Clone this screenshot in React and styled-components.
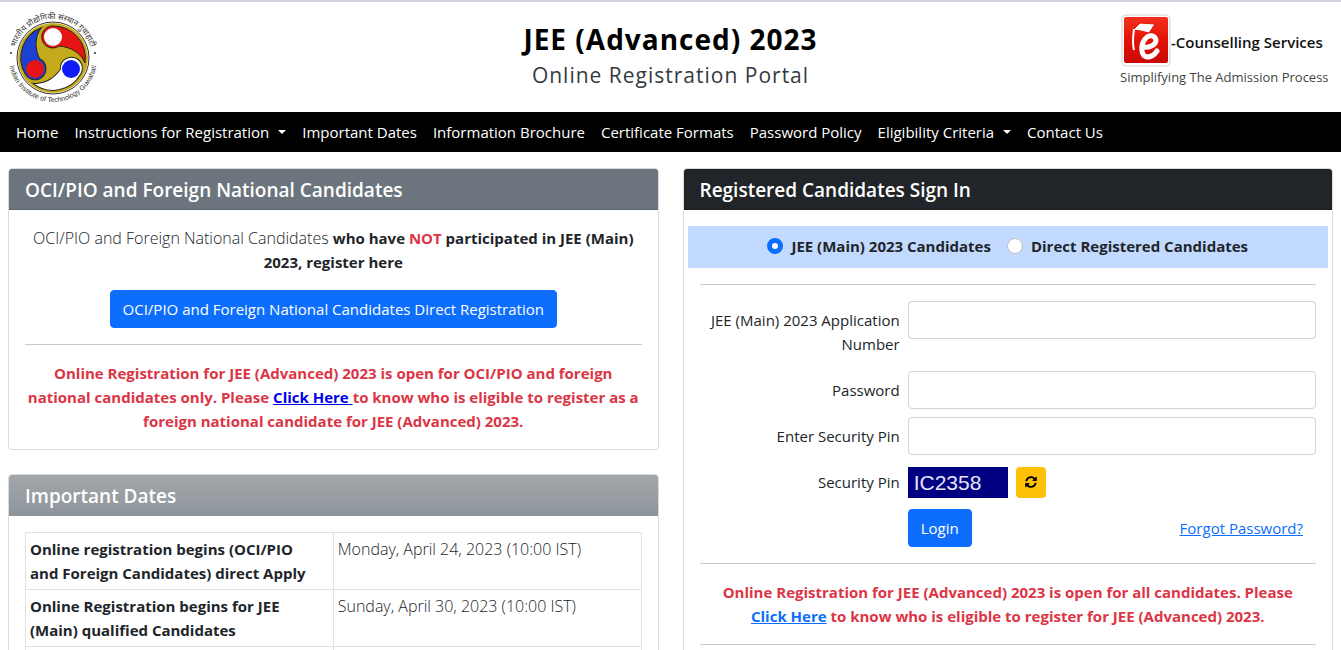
import React, { useState } from 'react'
import styled, { createGlobalStyle } from 'styled-components'

const GlobalStyle = createGlobalStyle`
  * {
    box-sizing: border-box;
  }
  body {
    margin: 0;
    background: #fff;
    color: #212529;
    font-family: 'Segoe UI', 'Open Sans', 'Noto Sans', sans-serif;
    font-size: 15px;
    line-height: 24px;
    overflow-x: hidden;
  }
  button,
  input {
    font: inherit;
  }
`

const Header = styled.header`
  display: grid;
  grid-template-columns: 1fr auto 1fr;
  align-items: start;
  height: 112px;
  padding: 10px 8px 0;
  border-top: 2px solid #d3d1dc;
`
const TitleBlock = styled.div`
  padding-top: 9px;
  text-align: center;
`
const Title = styled.h1`
  margin: 0;
  color: #000;
  font-size: 28px;
  font-weight: 700;
  line-height: 36px;
  letter-spacing: 1px;
`
const Subtitle = styled.p`
  margin: 0;
  color: #343a40;
  font-size: 21px;
  line-height: 36px;
  letter-spacing: 1px;
`
const Brand = styled.div`
  justify-self: end;
  display: flex;
  flex-direction: column;
  align-items: flex-start;
  min-width: 213px;
`
const BrandRow = styled.div`
  display: flex;
  align-items: center;
`
const BrandName = styled.span`
  padding-top: 4px;
  color: #111;
  font-size: 15px;
  font-weight: 600;
`
const Tagline = styled.span`
  color: #444;
  font-size: 13px;
  line-height: 20px;
`

const Nav = styled.nav`
  background: #000;
  padding: 0 8px;
`
const NavList = styled.ul`
  display: flex;
  flex-wrap: wrap;
  margin: 0;
  padding: 0;
  list-style: none;
`
const NavLink = styled.a`
  display: flex;
  align-items: center;
  padding: 8px;
  color: #fff;
  text-decoration: none;
`
const Caret = styled.span`
  margin-left: 9px;
  border-top: 4px solid;
  border-left: 4px solid transparent;
  border-right: 4px solid transparent;
`

const Main = styled.main`
  display: grid;
  grid-template-columns: repeat(2, minmax(0, 1fr));
  gap: 24px;
  align-items: start;
  padding: 16px 8px;
`
const Column = styled.div`
  display: flex;
  flex-direction: column;
  gap: 24px;
`
const Card = styled.section`
  border: 1px solid #d9dadb;
  border-radius: 4px;
  overflow: hidden;
`
const CardHeader = styled.h2`
  margin: 0;
  padding: 9px 16px 7px;
  border-bottom: 1px solid rgba(0, 0, 0, 0.12);
  background: ${(p) => p.$bg};
  color: #fff;
  font-size: 19px;
  font-weight: 600;
  line-height: 24px;
`
const CardBody = styled.div`
  padding: 16px;
`
const Text = styled.p`
  margin: 0 0 16px;
  font-size: 16px;
  font-weight: 300;
  text-align: center;
`
const Strong = styled.strong`
  font-size: 15px;
  font-weight: 700;
`
const Notice = styled.p`
  margin: 0;
  color: #dc3545;
  font-weight: 700;
  text-align: center;
`
const Danger = styled.span`
  color: #dc3545;
`
const Divider = styled.hr`
  margin: 16px 0;
  border: 0;
  border-top: 1px solid #c8c9ca;
`
const Link = styled.a`
  color: ${(p) => p.$color || '#0d6efd'};
  white-space: nowrap;
`
const Button = styled.button`
  padding: 6px 12px;
  border: 1px solid #0d6efd;
  border-radius: 4px;
  background: #0d6efd;
  color: #fff;
  cursor: pointer;
`
const ButtonRow = styled.div`
  display: flex;
  justify-content: center;
`

const DatesTable = styled.table`
  width: 100%;
  table-layout: fixed;
  border-collapse: collapse;
  th,
  td {
    padding: 4px;
    border: 1px solid #dee2e6;
    text-align: left;
    vertical-align: top;
  }
  th {
    padding-right: 16px;
    font-weight: 700;
  }
  td {
    font-size: 16px;
    font-weight: 300;
  }
`

const ModeBar = styled.div`
  display: flex;
  flex-wrap: wrap;
  justify-content: center;
  gap: 16px;
  margin: 0 -12px;
  padding: 8px 0 10px;
  background: #c2daff;
`
const RadioLabel = styled.label`
  display: flex;
  align-items: center;
  gap: 8px;
  font-weight: 700;
`
const Radio = styled.input`
  appearance: none;
  width: 16px;
  height: 16px;
  margin: 0;
  border: 1px solid #bfbfbf;
  border-radius: 50%;
  background: #fff;
  &:checked {
    border: 5px solid #0d6efd;
  }
`
const FormRow = styled.div`
  display: grid;
  grid-template-columns: minmax(0, 1fr) minmax(0, 2fr);
  align-items: start;
  margin: 0 -4px 8px;
  & > * {
    margin: 0 4px;
  }
  &:last-child {
    margin-bottom: 0;
  }
`
const FieldLabel = styled.label`
  padding: 7px 0;
  text-align: right;
`
const Input = styled.input`
  height: 38px;
  padding: 6px 12px;
  border: 1px solid #ced4da;
  border-radius: 4px;
  background: #fff;
  color: #212529;
`
const PinRow = styled.div`
  display: flex;
  align-items: center;
  gap: 8px;
  height: 38px;
`
const Captcha = styled.output`
  width: 100px;
  height: 31px;
  padding-left: 6px;
  background: #000080;
  color: #e6e6fa;
  font-family: 'Liberation Sans', Arial, sans-serif;
  font-size: 21px;
  line-height: 31px;
`
const RefreshButton = styled.button`
  display: flex;
  align-items: center;
  justify-content: center;
  width: 30px;
  height: 31px;
  padding: 0;
  border: 0;
  border-radius: 4px;
  background: #ffc107;
  color: #000;
  cursor: pointer;
`
const Actions = styled.div`
  display: flex;
  align-items: center;
  justify-content: space-between;
  padding-right: 13px;
`

const menu = [
  { label: 'Home' },
  { label: 'Instructions for Registration', dropdown: true },
  { label: 'Important Dates' },
  { label: 'Information Brochure' },
  { label: 'Certificate Formats' },
  { label: 'Password Policy' },
  { label: 'Eligibility Criteria', dropdown: true },
  { label: 'Contact Us' },
]

const dates = [
  ['Online registration begins (OCI/PIO and Foreign Candidates) direct Apply', 'Monday, April 24, 2023 (10:00 IST)'],
  ['Online Registration begins for JEE (Main) qualified Candidates', 'Sunday, April 30, 2023 (10:00 IST)'],
  ['', ''],
]

// one arm of the emblem, drawn three times at 120 degrees
const comma = 'M45 14 A32 32 0 0 1 77 51 C73 41 63 35 51 34 A11 11 0 1 1 45 14Z'

function InstituteLogo() {
  return (
    <svg width="92" height="94" viewBox="0 0 92 94" overflow="visible" role="img" aria-label="Indian Institute of Technology Guwahati">
      <defs>
        <path id="ringTop" d="M6 46 A39 39 0 0 1 84 46" />
        <path id="ringBottom" d="M1 46 A44 44 0 0 0 89 46" />
      </defs>
      <circle cx="45" cy="46" r="36" fill="#fff" stroke="#333" strokeWidth="1" />
      <circle cx="45" cy="46" r="35" fill="#c4ab1c" />
      <path d={comma} fill="#e61414" stroke="#2a2320" />
      <path d={comma} fill="#1c3fd4" stroke="#2a2320" transform="rotate(-120 45 46)" />
      <path d={comma} fill="#fff" stroke="#2a2320" transform="rotate(120 45 46)" />
      <circle cx="45" cy="25" r="9" fill="#fff" />
      <circle cx="27" cy="57" r="9" fill="#e61414" />
      <circle cx="63" cy="57" r="9" fill="#0f1cf5" />
      <circle cx="3" cy="41" r="1" fill="#333" />
      <circle cx="87" cy="41" r="1" fill="#333" />
      <g fill="#333">
        <text fontSize="8">
          <textPath href="#ringTop" startOffset="50%" textAnchor="middle">
            भारतीय प्रौद्योगिकी संस्थान गुवाहाटी
          </textPath>
        </text>
        <text fontSize="7" fontFamily="Liberation Sans, Arial, sans-serif">
          <textPath href="#ringBottom" startOffset="50%" textAnchor="middle">
            Indian Institute of Technology Guwahati
          </textPath>
        </text>
      </g>
    </svg>
  )
}

function CounsellingLogo() {
  return (
    <svg width="51" height="55" viewBox="0 0 51 55" aria-hidden="true">
      <defs>
        <linearGradient id="brandRed" x1="0" y1="0" x2="0" y2="1">
          <stop offset="0" stopColor="#f5301f" />
          <stop offset="0.5" stopColor="#e31308" />
          <stop offset="1" stopColor="#c80a04" />
        </linearGradient>
      </defs>
      <rect x="2" y="3" width="48" height="51" rx="4" fill="#fff" stroke="#dcd2d2" />
      <rect x="4" y="5" width="44" height="46" rx="2" fill="url(#brandRed)" />
      <path
        d="M24 35 C31 36 36 32 36 28 C35 23 29 22 25 27 C20 34 21 44 27 45 C32 45 35 42 37 39"
        fill="none"
        stroke="#fff"
        strokeWidth="5"
        strokeLinecap="round"
      />
      <path d="M13 18 L20 11 L35 12 L29 21 L21 19Z" fill="#fff" stroke="#e31308" strokeWidth="1" />
      <path d="M14 17 C13 24 12 31 14 38" fill="none" stroke="#fff" strokeWidth="2" />
    </svg>
  )
}

function RefreshIcon() {
  return (
    <svg width="12" height="12" viewBox="0 0 512 512" fill="currentColor" aria-hidden="true">
      <path d="M371 133a165 165 0 0 0-274 77c-1 6-6 10-12 10H28c-7 0-13-7-12-14C37 92 137 8 256 8c66 0 126 26 170 69l36-36c15-15 41-4 41 17v134c0 13-11 24-24 24H345c-21 0-32-26-17-41z" />
      <path d="M33 296h134c21 0 32 26 17 41l-42 42a165 165 0 0 0 273-77c1-6 6-10 12-10h57c7 0 13 7 12 14-21 114-121 198-240 198-66 0-126-26-170-69l-36 36c-15 15-41 4-41-17V320c0-13 11-24 24-24z" />
    </svg>
  )
}

function SignIn() {
  const [mode, setMode] = useState('main')

  return (
    <Card>
      <CardHeader $bg="#212529">Registered Candidates Sign In</CardHeader>
      <CardBody>
        <ModeBar>
          <RadioLabel>
            <Radio type="radio" name="mode" checked={mode === 'main'} onChange={() => setMode('main')} />
            JEE (Main) 2023 Candidates
          </RadioLabel>
          <RadioLabel>
            <Radio type="radio" name="mode" checked={mode === 'direct'} onChange={() => setMode('direct')} />
            Direct Registered Candidates
          </RadioLabel>
        </ModeBar>
        <Divider />
        <form onSubmit={(e) => e.preventDefault()}>
          <FormRow>
            <FieldLabel htmlFor="appno">JEE (Main) 2023 Application Number</FieldLabel>
            <Input id="appno" type="text" />
          </FormRow>
          <FormRow>
            <FieldLabel htmlFor="password">Password</FieldLabel>
            <Input id="password" type="password" />
          </FormRow>
          <FormRow>
            <FieldLabel htmlFor="pin">Enter Security Pin</FieldLabel>
            <Input id="pin" type="text" />
          </FormRow>
          <FormRow>
            <FieldLabel htmlFor="captcha">Security Pin</FieldLabel>
            <PinRow>
              <Captcha id="captcha">IC2358</Captcha>
              <RefreshButton type="button" aria-label="Refresh security pin">
                <RefreshIcon />
              </RefreshButton>
            </PinRow>
          </FormRow>
          <FormRow>
            <span />
            <Actions>
              <Button type="submit">Login</Button>
              <Link href="#forgot">Forgot Password?</Link>
            </Actions>
          </FormRow>
        </form>
        <Divider />
        <Notice>
          Online Registration for JEE (Advanced) 2023 is open for all candidates. Please <Link href="#eligible">Click Here</Link> to
          know who is eligible to register for JEE (Advanced) 2023.
        </Notice>
        <Divider />
      </CardBody>
    </Card>
  )
}

function App() {
  return (
    <>
      <GlobalStyle />
      <Header>
        <InstituteLogo />
        <TitleBlock>
          <Title>JEE (Advanced) 2023</Title>
          <Subtitle>Online Registration Portal</Subtitle>
        </TitleBlock>
        <Brand>
          <BrandRow>
            <CounsellingLogo />
            <BrandName>-Counselling Services</BrandName>
          </BrandRow>
          <Tagline>Simplifying The Admission Process</Tagline>
        </Brand>
      </Header>
      <Nav>
        <NavList>
          {menu.map((item) => (
            <li key={item.label}>
              <NavLink href="#">
                {item.label}
                {item.dropdown && <Caret />}
              </NavLink>
            </li>
          ))}
        </NavList>
      </Nav>
      <Main>
        <Column>
          <Card>
            <CardHeader $bg="#6c757d">OCI/PIO and Foreign National Candidates</CardHeader>
            <CardBody>
              <Text>
                OCI/PIO and Foreign National Candidates{' '}
                <Strong>
                  who have <Danger>NOT</Danger> participated in JEE (Main) 2023, register here
                </Strong>
              </Text>
              <ButtonRow>
                <Button type="button">OCI/PIO and Foreign National Candidates Direct Registration</Button>
              </ButtonRow>
              <Divider />
              <Notice>
                Online Registration for JEE (Advanced) 2023 is open for OCI/PIO and foreign national candidates only. Please{' '}
                <Link href="#foreign" $color="#0000ee">
                  Click Here{' '}
                </Link>
                to know who is eligible to register as a foreign national candidate for JEE (Advanced) 2023.
              </Notice>
            </CardBody>
          </Card>
          <Card>
            <CardHeader $bg="linear-gradient(#a2a6ab, #8f969b)">Important Dates</CardHeader>
            <CardBody>
              <DatesTable>
                <tbody>
                  {dates.map(([event, date], i) => (
                    <tr key={i}>
                      <th scope="row">{event}</th>
                      <td>{date}</td>
                    </tr>
                  ))}
                </tbody>
              </DatesTable>
            </CardBody>
          </Card>
        </Column>
        <SignIn />
      </Main>
    </>
  )
}

export default App
